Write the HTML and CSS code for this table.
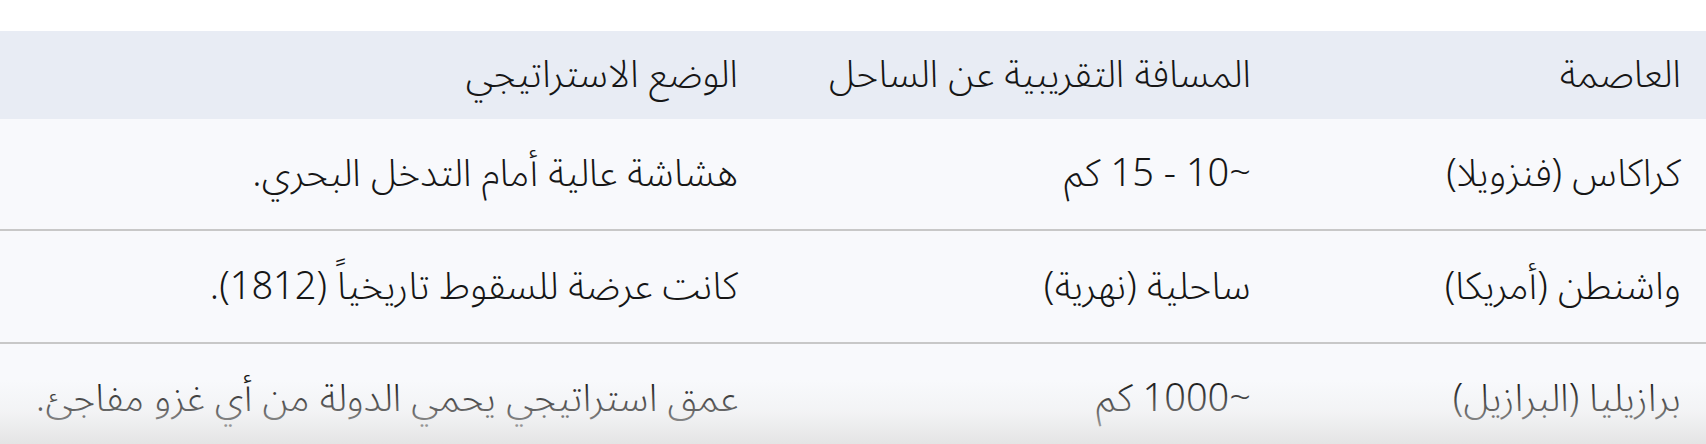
FILE: index.html
```html
<!DOCTYPE html>
<html lang="ar" dir="rtl">
<head>
<meta charset="utf-8">
<link rel="stylesheet" href="styles.css">
</head>
<body>
<div class="wrap">
  <table class="cmp">
    <colgroup>
      <col class="c1"><col class="c2"><col class="c3">
    </colgroup>
    <thead>
      <tr>
        <th>العاصمة</th>
        <th>المسافة التقريبية عن الساحل</th>
        <th>الوضع الاستراتيجي</th>
      </tr>
    </thead>
    <tbody>
      <tr>
        <td>كراكاس (فنزويلا)</td>
        <td>~10 - 15 كم</td>
        <td>هشاشة عالية أمام التدخل البحري.</td>
      </tr>
      <tr>
        <td>واشنطن (أمريكا)</td>
        <td>ساحلية (نهرية)</td>
        <td>كانت عرضة للسقوط تاريخياً (1812).</td>
      </tr>
      <tr>
        <td>برازيليا (البرازيل)</td>
        <td>~1000 كم</td>
        <td>عمق استراتيجي يحمي الدولة من أي غزو مفاجئ.</td>
      </tr>
    </tbody>
  </table>
  <div class="fade"></div>
</div>
</body>
</html>
```

FILE: styles.css
```css
html, body {
  margin: 0;
  padding: 0;
  background: #ffffff;
}
body {
  font-family: "Noto Sans Arabic", "Noto Sans", "DejaVu Sans", sans-serif;
  color: #161616;
  overflow: hidden;
}
.wrap {
  position: relative;
  padding-top: 31px;
  height: 413px;
  overflow: hidden;
}
.cmp {
  width: 1706px;
  border-collapse: collapse;
  table-layout: fixed;
  font-size: 38px;
  font-weight: 300;
}
.c1 { width: 430px; }
.c2 { width: 513px; }
.c3 { width: 763px; }
.cmp th {
  background: #e8ecf4;
  font-weight: 300;
  text-align: right;
  height: 88px;
  padding: 0 25px 0 0;
  vertical-align: middle;
}
.cmp td {
  background: #f8f9fc;
  text-align: right;
  padding: 0 25px 0 0;
  height: 110px;
  vertical-align: middle;
  border-bottom: 2px solid #c8c8c8;
}
.cmp tbody tr:nth-child(2) td { height: 111px; }
.fade {
  position: absolute;
  left: 0;
  right: 0;
  bottom: 0;
  height: 64px;
  background: linear-gradient(to bottom, rgba(240,240,240,0) 0%, rgba(234,234,234,0.4) 50%, rgba(226,226,226,0.9) 100%);
}
```
